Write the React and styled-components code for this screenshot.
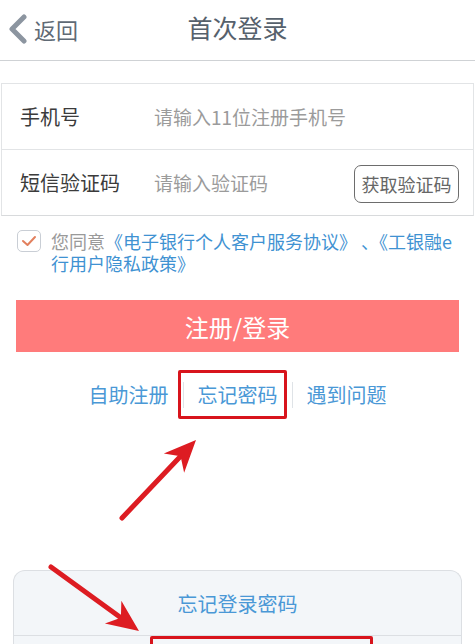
import React from 'react';
import styled, { createGlobalStyle } from 'styled-components';

const GlobalStyle = createGlobalStyle`
  html, body {
    margin: 0;
    padding: 0;
    background: #fff;
  }
  body {
    font-family: "Noto Sans CJK SC", "Noto Sans", sans-serif;
  }
`;

const Page = styled.div`
  position: relative;
  width: 475px;
  height: 644px;
  overflow: hidden;
  background: #fff;
`;

const Header = styled.header`
  position: relative;
  height: 61px;
  box-sizing: border-box;
  border-bottom: 1px solid #cfd2d5;
  display: flex;
  align-items: center;
  justify-content: center;
  padding-bottom: 6px;
`;

const Back = styled.div`
  position: absolute;
  left: 8px;
  top: 14px;
  display: flex;
  align-items: center;
  gap: 6px;
  color: #5f6a75;
  font-size: 22px;
  line-height: 28px;
`;

const Title = styled.h1`
  margin: 0;
  font-size: 25px;
  font-weight: 400;
  color: #56616c;
  line-height: 30px;
`;

const Form = styled.div`
  margin: 22px 1px 0;
  border: 1px solid #e2e4e6;
  border-bottom-color: #d8dadc;
`;

const Row = styled.div`
  height: 65px;
  display: flex;
  align-items: center;
  padding: 0 14px 0 18px;
  & + & {
    border-top: 1px solid #e2e4e6;
  }
`;

const Label = styled.div`
  width: 134px;
  font-size: 20px;
  color: #3b3b3b;
`;

const Placeholder = styled.div`
  flex: 1;
  font-size: 19px;
  color: #9b9b9b;
`;

const CodeButton = styled.div`
  width: 105px;
  height: 38px;
  box-sizing: border-box;
  border: 1.5px solid #6d6d6d;
  border-radius: 7px;
  display: flex;
  align-items: center;
  justify-content: center;
  font-size: 18px;
  color: #666;
  margin-top: 3px;
`;

const Agree = styled.div`
  display: flex;
  align-items: flex-start;
  gap: 10px;
  margin: 14px 20px 0 17px;
`;

const Checkbox = styled.div`
  flex: none;
  width: 24px;
  height: 22px;
  box-sizing: border-box;
  border: 1.5px solid #c9ced5;
  border-radius: 5px;
  display: flex;
  align-items: center;
  justify-content: center;
`;

const AgreeText = styled.div`
  font-size: 18px;
  line-height: 22px;
  color: #9a9a9a;
`;

const Doc = styled.span`
  color: #3f92d2;
`;

const Submit = styled.div`
  margin: 26px 16px 0;
  height: 52px;
  background: #ff7b7b;
  color: #fff;
  font-size: 24px;
  display: flex;
  align-items: center;
  justify-content: center;
`;

const Links = styled.div`
  margin-top: 18px;
  height: 50px;
  display: flex;
  justify-content: center;
  align-items: center;
`;

const LinkItem = styled.span`
  position: relative;
  font-size: 20px;
  color: #4a98d6;
  padding: 0 14px;
  line-height: 26px;
  & + & {
    border-left: 1px solid #dfe3e7;
  }
  ${(p) => p.$marked && `
    &::after {
      content: '';
      position: absolute;
      left: -6px;
      right: 5px;
      top: -12px;
      bottom: -11px;
      border: 3px solid #d8141c;
      border-radius: 2px;
    }
  `}
`;

const Card = styled.div`
  margin: 150px 13px 0 13px;
  height: 120px;
  background: #f3f6f9;
  border: 1px solid #dcdfe3;
  border-bottom: none;
  border-radius: 12px 12px 0 0;
`;

const CardTitle = styled.div`
  height: 64px;
  border-bottom: 1px solid #dcdfe3;
  display: flex;
  align-items: center;
  justify-content: center;
  font-size: 20px;
  color: #4a98d6;
`;

const CardRow = styled.div`
  position: relative;
  height: 50px;
`;

const Mark = styled.div`
  position: absolute;
  left: 136px;
  width: 223px;
  top: 0;
  height: 60px;
  box-sizing: border-box;
  border: 3px solid #d8141c;
  border-radius: 2px;
`;

const Overlay = styled.svg`
  position: absolute;
  left: 0;
  top: 0;
  pointer-events: none;
`;

function Arrow({ x1, y1, x2, y2 }) {
  const dx = x2 - x1;
  const dy = y2 - y1;
  const len = Math.hypot(dx, dy);
  const ux = dx / len;
  const uy = dy / len;
  const head = 32;
  const spread = 14;
  const bx = x2 - ux * head;
  const by = y2 - uy * head;
  const nx = -uy;
  const ny = ux;
  const mx = x2 - ux * head * 0.7;
  const my = y2 - uy * head * 0.7;
  const pts = [
    `${x2},${y2}`,
    `${bx + nx * spread},${by + ny * spread}`,
    `${mx},${my}`,
    `${bx - nx * spread},${by - ny * spread}`,
  ].join(' ');
  return (
    <g>
      <line x1={x1} y1={y1} x2={mx} y2={my} stroke="#dd1c22" strokeWidth="5" strokeLinecap="round" />
      <polygon points={pts} fill="#dd1c22" />
    </g>
  );
}

export default function App() {
  return (
    <Page>
      <GlobalStyle />
      <Header>
        <Back>
          <svg width="20" height="30" viewBox="0 0 20 30">
            <path d="M16 3 L4 15 L16 27" fill="none" stroke="#8c95a0" strokeWidth="5" strokeLinecap="round" strokeLinejoin="round" />
          </svg>
          <span>返回</span>
        </Back>
        <Title>首次登录</Title>
      </Header>

      <Form>
        <Row>
          <Label>手机号</Label>
          <Placeholder>请输入11位注册手机号</Placeholder>
        </Row>
        <Row>
          <Label>短信验证码</Label>
          <Placeholder>请输入验证码</Placeholder>
          <CodeButton>获取验证码</CodeButton>
        </Row>
      </Form>

      <Agree>
        <Checkbox>
          <svg width="16" height="12" viewBox="0 0 16 12">
            <path d="M2 6 L6.5 10 L14 2" fill="none" stroke="#e2805e" strokeWidth="2" strokeLinecap="round" strokeLinejoin="round" />
          </svg>
        </Checkbox>
        <AgreeText>
          您同意<Doc>《电子银行个人客户服务协议》 、《工银融e行用户隐私政策》</Doc>
        </AgreeText>
      </Agree>

      <Submit>注册/登录</Submit>

      <Links>
        <LinkItem>自助注册</LinkItem>
        <LinkItem $marked>忘记密码</LinkItem>
        <LinkItem>遇到问题</LinkItem>
      </Links>

      <Card>
        <CardTitle>忘记登录密码</CardTitle>
        <CardRow>
          <Mark />
        </CardRow>
      </Card>

      <Overlay width="475" height="644">
        <Arrow x1={122} y1={518} x2={196} y2={440} />
        <Arrow x1={51} y1={567} x2={139} y2={631} />
      </Overlay>
    </Page>
  );
}
